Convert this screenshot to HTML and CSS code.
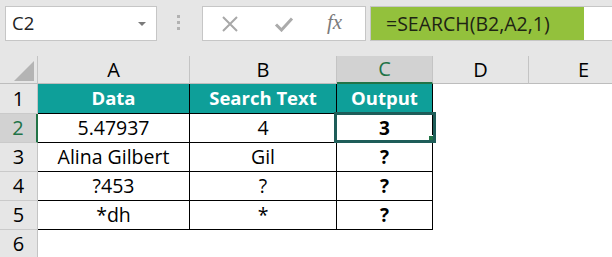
FILE: index.html
```html
<!DOCTYPE html>
<html>
<head>
<meta charset="utf-8">
<link rel="stylesheet" href="styles.css">
</head>
<body>
<div class="toolbar">
  <div class="namebox"><span class="ref">C2</span><span class="arrow"></span></div>
  <div class="dots"><i></i><i></i><i></i></div>
  <div class="fxbox">
    <svg class="ic-x" width="18" height="16" viewBox="0 0 18 16"><path d="M2 1 L16 15 M16 1 L2 15" stroke="#a8a8a8" stroke-width="2" fill="none"/></svg>
    <svg class="ic-ok" width="20" height="16" viewBox="0 0 20 16"><path d="M2 8.5 L7.5 14 L18 2.5" stroke="#ababab" stroke-width="3" fill="none"/></svg>
    <span class="fx">fx</span>
  </div>
  <div class="formula"><span class="hl">=SEARCH(B2,A2,1)</span></div>
</div>
<div class="sheet">
  <div class="corner"><svg width="20" height="20" viewBox="0 0 20 20"><path d="M20 0 L20 20 L0 20 Z" fill="#b4b4b4"/></svg></div>
  <div class="ch">A</div>
  <div class="ch">B</div>
  <div class="ch sel">C</div>
  <div class="ch">D</div>
  <div class="ch">E</div>

  <div class="rh">1</div>
  <div class="td th">Data</div>
  <div class="td th">Search Text</div>
  <div class="td th">Output</div>
  <div class="blank"></div>
  <div class="blank"></div>

  <div class="rh sel">2</div>
  <div class="td">5.47937</div>
  <div class="td">4</div>
  <div class="td out active">3<span class="selbox"><span class="handle"></span></span></div>
  <div class="blank"></div>
  <div class="blank"></div>

  <div class="rh">3</div>
  <div class="td">Alina Gilbert</div>
  <div class="td">Gil</div>
  <div class="td out">?</div>
  <div class="blank"></div>
  <div class="blank"></div>

  <div class="rh">4</div>
  <div class="td">?453</div>
  <div class="td">?</div>
  <div class="td out">?</div>
  <div class="blank"></div>
  <div class="blank"></div>

  <div class="rh">5</div>
  <div class="td">*dh</div>
  <div class="td">*</div>
  <div class="td out">?</div>
  <div class="blank"></div>
  <div class="blank"></div>

  <div class="rh">6</div>
  <div class="blank"></div>
  <div class="blank"></div>
  <div class="blank"></div>
  <div class="blank"></div>
  <div class="blank"></div>
</div>
</body>
</html>
```
FILE: styles.css
```css
* { box-sizing: border-box; }
html, body { margin: 0; padding: 0; }
body {
  width: 612px;
  height: 257px;
  overflow: hidden;
  background: #ffffff;
  font-family: "Open Sans", "Noto Sans", sans-serif;
  color: #000;
}
.toolbar {
  height: 56px;
  background: #e6e6e6;
  display: flex;
  align-items: flex-start;
  padding: 6px 0 0 5px;
}
.namebox {
  width: 152px;
  height: 35px;
  background: #fff;
  border: 1px solid #c6c6c6;
  display: flex;
  align-items: center;
  padding-left: 6px;
}
.ref {
  font-size: 18.5px;
  color: #222;
  line-height: 1;
}
.arrow {
  margin-left: auto;
  margin-right: 10px;
  width: 0;
  height: 0;
  border-left: 4px solid transparent;
  border-right: 4px solid transparent;
  border-top: 4px solid #7a7a7a;
}
.dots {
  margin-left: 20px;
  padding-top: 9px;
  display: flex;
  flex-direction: column;
  gap: 3px;
}
.dots i {
  display: block;
  width: 3px;
  height: 3px;
  background: #b2b2b2;
}
.fxbox {
  margin-left: 22px;
  width: 164px;
  height: 35px;
  background: #fff;
  border: 1px solid #c6c6c6;
  display: flex;
  align-items: center;
  padding-left: 18px;
}
.ic-ok { margin-left: 35px; }
.fx {
  margin-left: 33px;
  font-family: "Liberation Serif", serif;
  font-style: italic;
  font-size: 21px;
  color: #7b7b7b;
  line-height: 1;
  padding-bottom: 2px;
}
.formula {
  margin-left: 4px;
  flex: 1;
  height: 35px;
  background: #fff;
  border: 1px solid #c6c6c6;
  border-right: none;
  display: flex;
}
.hl {
  width: 213px;
  background: #93c13c;
  display: flex;
  align-items: center;
  padding-left: 15px;
  font-size: 19.5px;
  color: #1e2414;
  line-height: 1;
}
.sheet {
  display: grid;
  grid-template-columns: 38px 152px 147px 96px 96px 110px;
  grid-template-rows: 28px 30px 29px 29px 29px 29px 29px;
}
.corner {
  background: #e6e6e6;
  border-right: 1px solid #c4c4c4;
  border-bottom: 1px solid #bdbdbd;
  display: flex;
  justify-content: flex-end;
  align-items: flex-end;
  padding: 0 3px 2px 0;
}
.corner svg { display: block; }
.ch {
  background: #e6e6e6;
  border-right: 1px solid #c4c4c4;
  border-bottom: 1px solid #bdbdbd;
  display: flex;
  align-items: center;
  justify-content: center;
  font-size: 20px;
  line-height: 1;
}
.ch.sel {
  background: #d2d2d2;
  color: #217346;
  border-bottom: 2px solid #217346;
}
.rh {
  background: #e6e6e6;
  border-right: 1px solid #c4c4c4;
  border-bottom: 1px solid #cacaca;
  display: flex;
  align-items: center;
  justify-content: center;
  font-size: 20px;
  line-height: 1;
}
.rh.sel {
  background: #d2d2d2;
  color: #217346;
  border-right: 2px solid #217346;
}
.td {
  position: relative;
  border-right: 1px solid #000;
  border-bottom: 1px solid #000;
  display: flex;
  align-items: center;
  justify-content: center;
  font-size: 19.5px;
  line-height: 1;
  white-space: nowrap;
}
.th {
  background: #0e9f99;
  color: #fff;
  font-weight: 700;
  font-size: 18.5px;
}
.out { font-weight: 700; font-size: 19px; }
.blank { background: #fff; }
.selbox {
  position: absolute;
  left: -3px;
  top: -2px;
  width: 102px;
  height: 31px;
  border: 3px solid #1e5d59;
}
.handle {
  position: absolute;
  right: 0;
  bottom: 0;
  width: 5px;
  height: 5px;
  background: #217346;
  border-left: 1px solid #fff;
  border-top: 1px solid #fff;
}
```
